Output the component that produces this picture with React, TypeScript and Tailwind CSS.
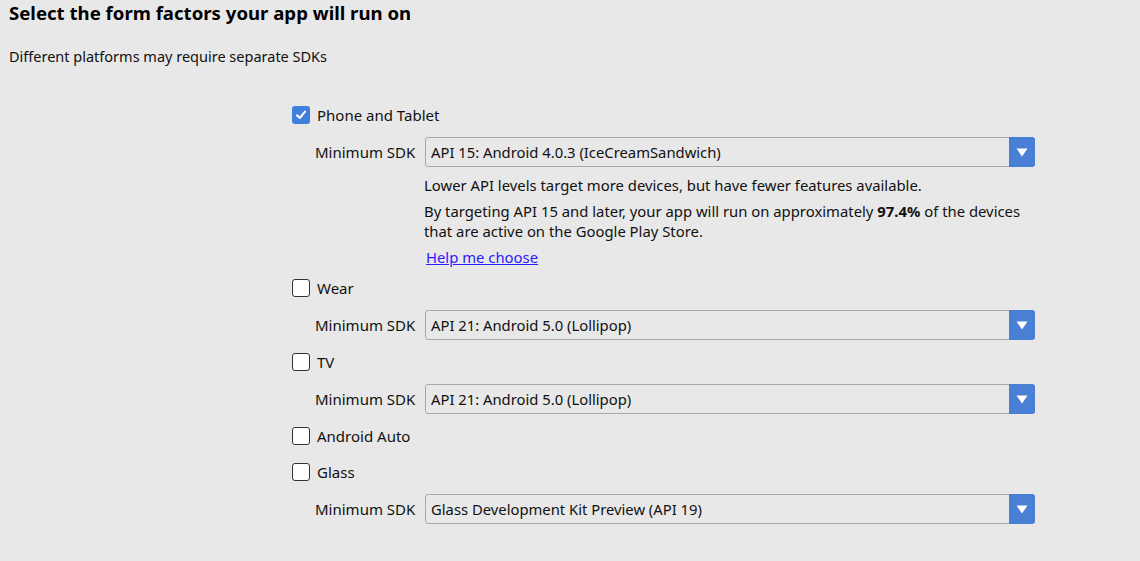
import type { ReactNode } from 'react';

const font = { fontFamily: '"Noto Sans", "Open Sans", sans-serif' };

function Checkbox({ checked, label }: { checked?: boolean; label: string }) {
  return (
    <div className="flex items-center h-6">
      <div
        className={`w-[18px] h-[18px] rounded-[3px] flex items-center justify-center ${
          checked ? 'bg-[#3f7fe0]' : 'bg-white border border-[#333]'
        }`}
      >
        {checked && (
          <svg width="12" height="12" viewBox="0 0 12 12">
            <path d="M2 6.2 L4.8 9 L10 2.6" fill="none" stroke="white" strokeWidth="2" strokeLinecap="round" strokeLinejoin="round" />
          </svg>
        )}
      </div>
      <span className="ml-[7px] text-[15px] text-[#111]">{label}</span>
    </div>
  );
}

function SdkSelect({ value, className = '' }: { value: string; className?: string }) {
  return (
    <div className={`flex items-center h-[30px] ml-[23px] ${className}`}>
      <span className="w-[110px] text-[15px] text-[#111]">Minimum SDK</span>
      <div className="flex h-[30px] w-[610px] bg-[#e8e8e8] border border-[#a8a8a8] rounded-[3px]">
        <span className="flex-1 pl-[5px] text-[14.8px] leading-[28px] text-[#111]">{value}</span>
        <div className="w-[26px] -my-px -mr-px bg-[#4a7fd6] rounded-r-[3px] flex items-center justify-center">
          <svg width="12" height="9" viewBox="0 0 12 9">
            <path d="M0.5 0.5 H11.5 L6 8.5 Z" fill="white" />
          </svg>
        </div>
      </div>
    </div>
  );
}

function Note({ children, className = '' }: { children: ReactNode; className?: string }) {
  return <div className={`ml-[132px] text-[14.85px] leading-[20px] text-[#111] ${className}`}>{children}</div>;
}

export default function App() {
  return (
    <div className="w-full h-[561px] bg-[#e8e8e8] overflow-hidden" style={font}>
      <div className="px-[9px]">
        <h1 className="pt-[1px] text-[18.6px] leading-[24px] font-bold text-black">
          Select the form factors your app will run on
        </h1>
        <p className="mt-[21px] text-[14.5px] leading-[20px] text-[#111]">Different platforms may require separate SDKs</p>
      </div>

      <div className="ml-[292px] mt-[37px]">
        <Checkbox checked label="Phone and Tablet" />
        <SdkSelect value="API 15: Android 4.0.3 (IceCreamSandwich)" className="mt-[10px]" />
        <Note className="mt-[8px]">Lower API levels target more devices, but have fewer features available.</Note>
        <Note className="mt-[6px]">
          By targeting API 15 and later, your app will run on approximately <b>97.4%</b> of the devices
          <br />
          that are active on the Google Play Store.
        </Note>
        <Note className="mt-[6px] pl-[2px]">
          <a href="#" className="text-[#2a1aff] underline">Help me choose</a>
        </Note>

        <div className="mt-[9px]">
          <Checkbox label="Wear" />
        </div>
        <SdkSelect value="API 21: Android 5.0 (Lollipop)" className="mt-[10px]" />

        <div className="mt-[10px]">
          <Checkbox label="TV" />
        </div>
        <SdkSelect value="API 21: Android 5.0 (Lollipop)" className="mt-[10px]" />

        <div className="mt-[10px]">
          <Checkbox label="Android Auto" />
        </div>
        <div className="mt-[12px]">
          <Checkbox label="Glass" />
        </div>
        <SdkSelect value="Glass Development Kit Preview (API 19)" className="mt-[10px]" />
      </div>
    </div>
  );
}
